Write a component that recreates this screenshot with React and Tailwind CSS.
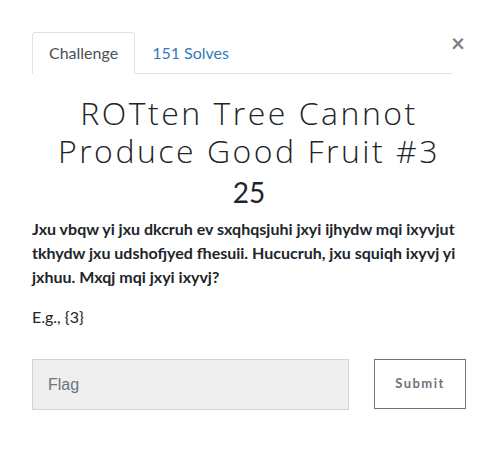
import { useState } from 'react'

const ChallengeModal = () => {
  const [tab, setTab] = useState('challenge')
  const [flag, setFlag] = useState('')

  return (
    <div className="w-[497px] h-[460px] bg-white pt-8 pl-8 font-['Lato',sans-serif] text-[#212529]">
      {/* Tabs + close */}
      <div className="flex items-start">
        <div className="w-[420px] flex border-b border-[#dee2e6]">
          <button
            onClick={() => setTab('challenge')}
            className="-mb-px px-4 py-2 text-base leading-6 text-[#495057] bg-white border border-[#dee2e6] border-b-white rounded-t"
          >
            Challenge
          </button>
          <button
            onClick={() => setTab('solves')}
            className="-mb-px px-4 py-2 text-base leading-6 text-[#337ab7] border border-transparent"
          >
            151 Solves
          </button>
        </div>
        <button className="-ml-[1px] w-[12px] -mt-[1px] text-2xl leading-6 font-bold text-black opacity-50">
          ×
        </button>
      </div>

      <div className="w-[434px]">
        {/* Title */}
        <h2 className="mt-5 text-center text-[32px] leading-[38px] font-light font-['Open_Sans',sans-serif] tracking-[2.5px] text-[#212529]">
          ROTten Tree Cannot Produce Good Fruit #3
        </h2>
        <h3 className="mt-[5px] text-center text-[28px] leading-[34px] text-[#212529]">25</h3>

        {/* Description */}
        <p className="mt-[8px] text-base leading-6 font-bold">
          Jxu vbqw yi jxu dkcruh ev sxqhqsjuhi jxyi ijhydw mqi ixyvjut tkhydw jxu udshofjyed fhesuii.
          Hucucruh, jxu squiqh ixyvj yi jxhuu. Mxqj mqi jxyi ixyvj?
        </p>
        <p className="mt-4 text-base leading-6">E.g., {'{3}'}</p>

        {/* Flag form */}
        <div className="mt-[30px] flex justify-between">
          <input
            value={flag}
            onChange={(e) => setFlag(e.target.value)}
            placeholder="Flag"
            className="w-[317px] h-[51px] px-[15px] bg-[#efefef] border border-[#ced4da] text-base font-['Liberation_Sans',sans-serif] placeholder:text-[#6c757d] outline-none"
          />
          <button className="w-[92px] h-[50px] border border-[#6c757d] text-[13px] font-bold tracking-[1.5px] text-[#6c757d]">
            Submit
          </button>
        </div>
      </div>
    </div>
  )
}

export default function App() {
  return <ChallengeModal />
}
